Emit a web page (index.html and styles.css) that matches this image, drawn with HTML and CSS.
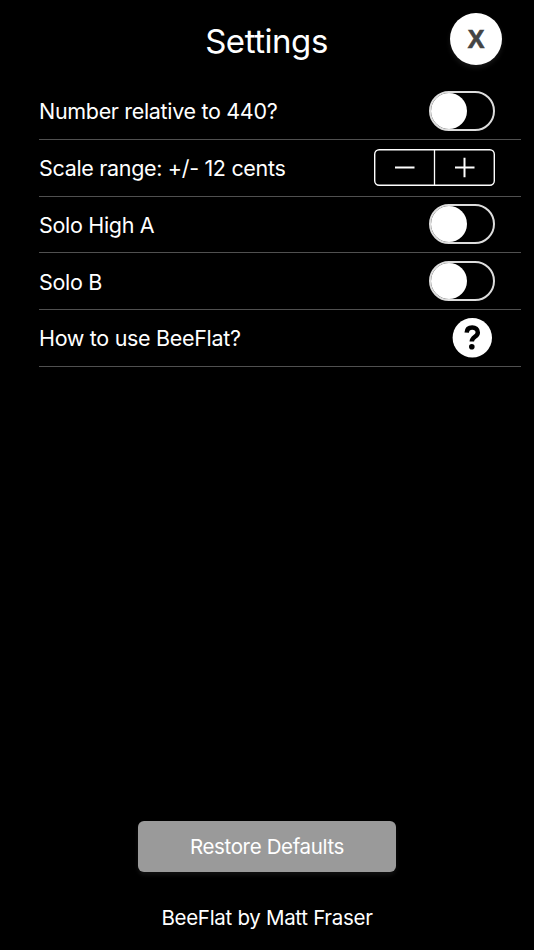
FILE: index.html
```html
<!DOCTYPE html>
<html lang="en">
<head>
<meta charset="utf-8">
<title>Settings</title>
<link rel="stylesheet" href="styles.css">
</head>
<body>
<main class="screen">
  <header class="header">
    <h1 class="title">Settings</h1>
    <button class="close" aria-label="Close">X</button>
  </header>
  <ul class="settings">
    <li class="row"><span class="label">Number relative to 440?</span><span class="switch"><span class="knob"></span></span></li>
    <li class="row"><span class="label">Scale range: +/- 12 cents</span>
      <svg class="stepper" width="121" height="38" viewBox="0 0 121 38" fill="none" stroke="#fff">
        <rect x=".7" y=".7" width="119.6" height="35.6" rx="4.5" stroke-width="1.4"/>
        <path d="M60.5 1v35" stroke-width="1.3"/>
        <path d="M21 18.500h19.500M81 18.500h19.500M90.500 8.800v19.500" stroke-width="2"/>
      </svg>
    </li>
    <li class="row"><span class="label">Solo High A</span><span class="switch"><span class="knob"></span></span></li>
    <li class="row"><span class="label">Solo B</span><span class="switch"><span class="knob"></span></span></li>
    <li class="row"><span class="label">How to use BeeFlat?</span>
      <svg class="help" width="40" height="40" viewBox="0 0 40 40">
        <circle cx="20.3" cy="19.700" r="19.700" fill="#fff"/>
        <path d="M14.700 14.700c.2-3.700 2.500-5.100 5.500-5.100 3.200 0 5.600 1.600 5.600 4.800 0 4.500-6 4.300-6 9.200" fill="none" stroke="#000" stroke-width="4.5"/>
        <circle cx="19.800" cy="28.800" r="2.800"/>
      </svg>
    </li>
  </ul>
  <footer class="footer">
    <button class="restore">Restore Defaults</button>
    <p class="credit">BeeFlat by Matt Fraser</p>
  </footer>
</main>
</body>
</html>
```
FILE: styles.css
```css
* { box-sizing: border-box; }
body { margin: 0; background: #000; color: #fff; font-family: Inter, "Liberation Sans", sans-serif; }
.screen { display: flex; flex-direction: column; height: 950px; overflow: hidden; }
.header { display: grid; grid-template-columns: 1fr auto 1fr; height: 83px; padding: 13px 32px 0 31px; align-items: start; flex: none; }
.title { grid-column: 2; margin: 8px 0 0; font-size: 33px; line-height: 40px; font-weight: 400; letter-spacing: -0.45px; }
.close { justify-self: end; width: 52px; height: 52px; padding: 1px 0 0; border: 0; border-radius: 50%; background: #fff; color: #444; font: 700 25px/51px "Liberation Sans", sans-serif; -webkit-text-stroke: .7px #444; box-shadow: 0 3px 5px #161616; }
.settings { list-style: none; margin: 0 13px 0 39px; padding: 0; }
.row { display: flex; align-items: center; justify-content: space-between; height: 56.75px; padding-right: 26px; border-bottom: 1px solid #505050; }
.label { padding-top: 1px; font-size: 21.500px; line-height: 28px; font-weight: 400; letter-spacing: -0.32px; white-space: nowrap; }
.switch { width: 66px; height: 40px; padding: 0; border: 2px solid #ddd; border-radius: 20px; }
.knob { display: block; width: 36px; height: 36px; border-radius: 50%; background: #fff; }
.help { margin: 0 3px 0 0; }
.footer { margin-top: auto; display: flex; flex-direction: column; align-items: center; }
.restore { width: 258px; height: 51px; padding: 0; border: 0; border-radius: 6px; background: #9a9a9a; color: #fff; font: 400 20.500px/51px Inter, sans-serif; letter-spacing: -0.35px; box-shadow: 0 3px 4px #111; }
.credit { margin: 32px 0 18px; font-size: 20.500px; line-height: 28px; font-weight: 400; letter-spacing: -0.3px; }
```
